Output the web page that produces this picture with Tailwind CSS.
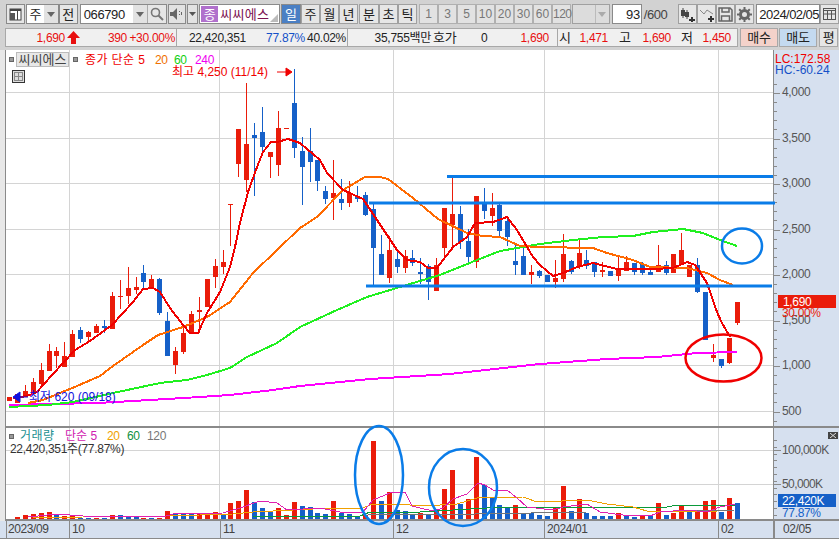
<!DOCTYPE html>
<html lang="ko">
<head>
<meta charset="UTF-8">
<script src="https://cdn.jsdelivr.net/npm/@tailwindcss/browser@4"></script>
<title>씨씨에스 차트</title>
</head>
<body class="m-0 w-[839px] h-[539px] overflow-hidden bg-[#d2d2d2] text-[12px] leading-none text-[#222] font-['Liberation_Sans','Noto_Sans_CJK_KR',sans-serif]">

<!-- toolbar -->
<div class="flex items-center h-[27px] pl-[6px] pt-[1px]">
  <button class="flex items-center justify-center w-[19px] h-[20px] bg-[#e6e6e6] border border-[#8a8a8a]">
    <svg width="13" height="13" viewBox="0 0 13 13"><rect x="1" y="1" width="11" height="11" fill="#fff" stroke="#444"/><rect x="1" y="1" width="11" height="2" fill="#444"/><rect x="1" y="5" width="5" height="7" fill="#555"/><line x1="8.5" y1="3" x2="8.5" y2="12" stroke="#444"/></svg>
  </button>
  <div class="flex ml-[1px] w-[33px] h-[20px] border border-[#8a8a8a] bg-white">
    <span class="flex-1 flex items-center justify-center text-[13px]">주</span>
    <span class="flex items-center justify-center w-[14px] bg-[#e2e2e2]"><svg width="8" height="5"><path d="M0 0h8L4 5z" fill="#666"/></svg></span>
  </div>
  <button class="w-[19px] h-[20px] ml-[0px] bg-[#e6e6e6] border border-[#8a8a8a] text-[13px]">전</button>
  <div class="flex ml-[2px] w-[88px] h-[20px] border border-[#8a8a8a] bg-white">
    <span class="flex-1 flex items-center pl-[3px] text-[13px] tracking-[-0.4px]">066790</span>
    <span class="flex items-center justify-center w-[14px] bg-[#e2e2e2]"><svg width="8" height="5"><path d="M0 0h8L4 5z" fill="#666"/></svg></span>
    <span class="flex items-center justify-center w-[19px] bg-[#e6e6e6] border-l border-[#aaa]"><svg width="14" height="14" viewBox="0 0 14 14" fill="none" stroke="#777" stroke-width="1.6"><circle cx="5.5" cy="5.5" r="4"/><path d="M8.5 8.5l4.5 4.5" stroke-width="2"/></svg></span>
  </div>
  <button class="flex items-center justify-center w-[18px] h-[20px] ml-[1px] bg-[#e2e2e2] border border-[#8a8a8a]">
    <svg width="14" height="12" viewBox="0 0 14 12"><path d="M0 4h3l4-4v12L3 8H0z" fill="#666"/><path d="M9 3h1v1H9zM9 6h1v1H9zM11 4h1v3h-1z" fill="#666"/></svg>
  </button>
  <button class="flex items-center justify-center w-[11px] h-[20px] ml-[1px] bg-[#e2e2e2] border border-[#8a8a8a]"><svg width="7" height="4"><path d="M0 0h7L3.5 4z" fill="#555"/></svg></button>
  <div class="relative flex items-center w-[81px] h-[20px] ml-[1px] bg-white border border-[#8a8a8a]">
    <span class="flex items-center justify-center w-[17px] h-[16px] ml-[1px] bg-[#b070cc] text-white text-[13px]">종</span>
    <span class="ml-[2px] text-[13px] tracking-[0.3px] text-[#7a1050]">씨씨에스</span>
    <svg class="absolute right-[1px] bottom-[1px]" width="8" height="8"><path d="M8 0v8H0z" fill="#bbb"/></svg>
  </div>
  <div class="flex ml-[1px] text-[13px]">
    <button class="w-[20px] h-[20px] bg-[#4a7fc4] text-white border border-[#8a8a8a]">일</button>
    <button class="w-[19px] h-[20px] bg-[#e6e6e6] border border-[#a0a0a0]">주</button>
    <button class="w-[19px] h-[20px] bg-[#e6e6e6] border border-[#a0a0a0]">월</button>
    <button class="w-[19px] h-[20px] bg-[#e6e6e6] border border-[#a0a0a0]">년</button>
    <button class="w-[20px] h-[20px] ml-[1px] bg-[#e6e6e6] border border-[#a0a0a0]">분</button>
    <button class="w-[19px] h-[20px] bg-[#e6e6e6] border border-[#a0a0a0]">초</button>
    <button class="w-[19px] h-[20px] bg-[#e6e6e6] border border-[#a0a0a0]">틱</button>
  </div>
  <div class="flex ml-[2px] text-[#777]">
    <button class="w-[19px] h-[20px] bg-[#e2e2e2] border border-[#b0b0b0]">1</button>
    <button class="w-[19px] h-[20px] bg-[#e2e2e2] border border-[#b0b0b0]">3</button>
    <button class="w-[19px] h-[20px] bg-[#e2e2e2] border border-[#b0b0b0]">5</button>
    <button class="w-[19px] h-[20px] bg-[#e2e2e2] border border-[#b0b0b0]">10</button>
    <button class="w-[19px] h-[20px] bg-[#e2e2e2] border border-[#b0b0b0]">20</button>
    <button class="w-[19px] h-[20px] bg-[#e2e2e2] border border-[#b0b0b0]">30</button>
    <button class="w-[19px] h-[20px] bg-[#e2e2e2] border border-[#b0b0b0]">60</button>
    <button class="w-[19px] h-[20px] bg-[#e2e2e2] border border-[#b0b0b0] tracking-[-0.5px]">120</button>
  </div>
  <div class="flex ml-[1px] w-[38px] h-[20px] bg-[#dcdcdc] border border-[#a0a0a0]">
    <span class="flex-1"></span>
    <span class="flex items-center justify-center w-[14px] border-l border-[#bbb]"><svg width="8" height="5"><path d="M0 0h8L4 5z" fill="#aaa"/></svg></span>
  </div>
  <div class="flex items-center justify-end w-[30px] h-[20px] ml-[2px] pr-[1px] bg-white border border-[#8a8a8a] text-[13px] tracking-[-0.4px]">93</div>
  <span class="ml-[2px] w-[34px] text-[13px] tracking-[-0.4px] text-[#444]">/600</span>
  <button class="flex items-center justify-center w-[19px] h-[20px] bg-[#e6e6e6] border border-[#a0a0a0]">
    <svg width="15" height="15" viewBox="0 0 15 15"><path d="M3 1v10M7 3v9" stroke="#444"/><rect x="1" y="3" width="4" height="6" fill="#444"/><rect x="5" y="5" width="4" height="5" fill="#444"/><path d="M11 10h2v2h2v2h-2v1h-2v-1H9v-2h2z" fill="#333"/></svg>
  </button>
  <button class="flex items-center justify-center w-[20px] h-[20px] bg-[#e6e6e6] border border-[#a0a0a0]">
    <svg width="16" height="15" viewBox="0 0 16 15"><path d="M1 3l4 4 3-4 6 4" fill="none" stroke="#888"/><path d="M11 9h2v2h2v2h-2v2h-2v-2H9v-2h2z" fill="#333"/></svg>
  </button>
  <button class="flex items-center justify-center w-[19px] h-[20px] bg-[#e6e6e6] border border-[#a0a0a0]">
    <svg width="15" height="15" viewBox="0 0 15 15" fill="none" stroke="#666" stroke-width="1.5"><path d="M1 1h11l2 2v11H1z"/><path d="M4 1v4h7V1M3.5 14V9h8v5"/></svg>
  </button>
  <button class="flex items-center justify-center w-[19px] h-[20px] bg-[#e6e6e6] border border-[#a0a0a0]">
    <svg width="15" height="15" viewBox="0 0 15 15"><circle cx="7.5" cy="7.5" r="4" fill="none" stroke="#666" stroke-width="3"/><path d="M7.5 0v15M0 7.5h15M2.2 2.2l10.6 10.6M12.8 2.2L2.2 12.8" stroke="#666" stroke-width="2" stroke-dasharray="2.5 10 2.5 0"/></svg>
  </button>
  <div class="flex items-center w-[64px] h-[20px] ml-[2px] pl-[2px] bg-white border border-[#8a8a8a] text-[13px] tracking-[-0.55px] whitespace-nowrap">2024/02/05</div>
  <button class="flex items-center justify-center w-[19px] h-[20px] bg-[#e6e6e6] border border-[#a0a0a0]">
    <svg width="13" height="12" viewBox="0 0 13 12" fill="none" stroke="#555"><rect x=".5" y=".5" width="12" height="11"/><path d="M.5 2.5h12M.5 6h12M4.500 2v10M8.500 2v10"/></svg>
  </button>
</div>

<!-- price strip -->
<div class="flex items-center h-[19px] mt-[1px] pl-[5px] mb-[3px] text-[12px] tracking-[-0.3px] whitespace-nowrap">
  <div class="flex items-center w-[172px] h-full bg-[#f0f0f0] border border-[#a8a8a8] text-[#e81010]">
    <span class="w-[59px] text-right">1,690</span>
    <svg class="ml-[2px]" width="13" height="13" viewBox="0 0 13 13"><path d="M6.500 0L13 7H9v6H4V7H0z" fill="#e81010"/></svg>
    <span class="w-[47px] text-right">390</span>
    <span class="w-[48px] text-right">+30.00%</span>
  </div>
  <div class="flex items-center w-[171px] h-full bg-[#f0f0f0] border-y border-r border-[#a8a8a8]">
    <span class="w-[69px] text-right">22,420,351</span>
    <span class="w-[59px] text-right text-[#1450c8]">77.87%</span>
    <span class="w-[41px] text-right">40.02%</span>
  </div>
  <div class="flex items-center w-[209px] h-full bg-[#f0f0f0] border-y border-[#a8a8a8]">
    <span class="w-[83px] text-right">35,755백만</span>
    <span class="ml-[2px] w-[26px] text-[13px]">호가</span>
    <span class="ml-[22px] w-[6px]">0</span>
    <span class="w-[62px] text-right text-[#e81010]">1,690</span>
  </div>
  <div class="flex items-center w-[181px] h-full bg-[#f0f0f0] border border-[#a8a8a8]">
    <span class="ml-[1px] w-[10px] text-[13px]">시</span>
    <span class="w-[39px] text-right text-[#e81010]">1,471</span>
    <span class="ml-[11px] w-[12px] text-[13px]">고</span>
    <span class="w-[40px] text-right text-[#e81010]">1,690</span>
    <span class="ml-[10px] w-[12px] text-[13px]">저</span>
    <span class="w-[38px] text-right text-[#e81010]">1,450</span>
  </div>
  <button class="w-[38px] h-full ml-[2px] bg-[#f4d2ca] border border-[#a8a8a8] text-[13px]">매수</button>
  <button class="w-[38px] h-full ml-[1px] bg-[#c4daf0] border border-[#a8a8a8] text-[13px]">매도</button>
  <button class="w-[19px] h-full ml-[2px] bg-[#e6e6e6] border border-[#a8a8a8] text-[13px]">평</button>
</div>

<!-- chart -->
<div class="relative h-[489px] bg-[#e8e8e8]">
  <svg id="price" class="block" width="839" height="378" viewBox="0 50 839 378" font-size="12" letter-spacing="-0.35"></svg>
  <svg id="volume" class="block" width="839" height="93" viewBox="0 428 839 93" font-size="12" letter-spacing="-0.35"></svg>

  <!-- legend, price panel -->
  <div class="absolute left-[9px] top-[2px] flex items-center">
    <span class="w-[5px] h-[5px] bg-[#999] border border-[#666]"></span>
    <span class="flex items-center justify-center w-[53px] h-[15px] ml-[2px] bg-[#e8e8e8] border border-[#bbb] text-[13px] text-[#444]">씨씨에스</span>
    <span class="w-[5px] h-[5px] ml-[4px] bg-[#999] border border-[#666]"></span>
    <span class="ml-[7px] w-[70px] text-[#f00000] whitespace-nowrap tracking-[0.4px]">종가 단순 5</span>
    <span class="w-[19px] text-[#f07000] tracking-[-0.3px]">20</span>
    <span class="w-[21px] text-[#10d010] tracking-[-0.3px]">60</span>
    <span class="text-[#f000f0] tracking-[-0.3px]">240</span>
  </div>
  <span class="absolute left-[12px] top-[20px] flex items-center justify-center w-[13px] h-[13px] bg-[#ddd] border border-[#333]">
    <svg width="9" height="9" viewBox="0 0 9 9" fill="none" stroke="#888"><path d="M0 .5h9M0 4.500h9M0 8.500h9M.5 0v9M4.500 0v9M8.500 0v9"/></svg>
  </span>
  <span class="absolute left-[172px] top-[16px] text-[#f00000] whitespace-nowrap">최고 4,250 (11/14)</span>
  <span class="absolute left-[29px] top-[341px] text-[#1010e0] whitespace-nowrap">최저 620 (09/18)</span>
  <span class="absolute left-[775px] top-[3px] text-[#f00000] whitespace-nowrap">LC:172.58</span>
  <span class="absolute left-[775px] top-[14px] text-[#1450c8] whitespace-nowrap">HC:-60.24</span>

  <!-- legend, volume panel -->
  <div class="absolute left-[9px] top-[380px] flex items-center">
    <span class="w-[5px] h-[5px] bg-[#999] border border-[#666]"></span>
    <span class="ml-[6px] w-[45px] text-[#209090] tracking-[0.5px]">거래량</span>
    <span class="w-[42px] text-[#d020b0]">단순 5</span>
    <span class="w-[20px] text-[#f0a000] tracking-[-0.3px]">20</span>
    <span class="w-[20px] text-[#109040] tracking-[-0.3px]">60</span>
    <span class="text-[#777] tracking-[-0.3px]">120</span>
  </div>
  <span class="absolute left-[10px] top-[393px] text-[#333] whitespace-nowrap tracking-[-0.3px]">22,420,351주(77.87%)</span>
  <span class="absolute left-[828px] top-[382px] flex items-center justify-center w-[10px] h-[7px] bg-[#444]"><svg width="6" height="5" stroke="#ddd"><path d="M0 0l6 5M6 0L0 5"/></svg></span>

  <!-- date axis -->
  <div class="flex h-[18px] w-[839px] bg-[#d6e0ef] border-b border-[#8a8a8a] text-[#444] text-[12px] tracking-[-0.4px]">
    <span class="ml-[6px] pl-[1px] pt-[2px] w-[63px] border-l border-[#8a8a8a]">2023/09</span>
    <span class="pl-[2px] pt-[2px] w-[151px] border-l border-[#8a8a8a]">10</span>
    <span class="pl-[2px] pt-[2px] w-[173px] border-l border-[#8a8a8a]">11</span>
    <span class="pl-[2px] pt-[2px] w-[151px] border-l border-[#8a8a8a]">12</span>
    <span class="pl-[2px] pt-[2px] w-[174px] border-l border-[#8a8a8a]">2024/01</span>
    <span class="pl-[2px] pt-[2px] w-[55px] border-l border-[#8a8a8a]">02</span>
    <span class="pl-[8px] pt-[2px] flex-1 border-l-2 border-[#8a8a8a]">02/05</span>
  </div>

  <!-- hand-drawn marks, they run over the panel edges -->
  <svg class="absolute left-0 top-0 pointer-events-none" width="839" height="489" viewBox="0 50 839 489" fill="none" stroke="#0a7ce8" stroke-width="2.5">
    <ellipse cx="379" cy="475" rx="24" ry="49"/>
    <ellipse cx="463" cy="487.5" rx="34" ry="38.5"/>
    <ellipse cx="742" cy="246" rx="20" ry="17.5"/>
    <ellipse cx="723.5" cy="358" rx="38" ry="23.5" stroke="#f00000"/>
  </svg>
</div>

<script>
// 캔들: [색, 몸통 위, 몸통 아래, 꼬리 위, 꼬리 아래] (px)
const candles = [
['r',397,401,397,401],['r',394,403,394,403],['r',391,396,385,397],['r',382,393,378,393],['r',370,384,363,385],
['r',351,371,344,371],['r',351,356,347,368],['r',356,367,342,367],['r',334,357,330,357],['b',330,339,327,343],
['r',332,337,331,341],['r',326,333,324,333],['b',326,328,320,333],['r',296,329,292,329],['r',296,297,280,309],
['r',288,296,267,304],['r',287,290,277,294],['b',273,282,265,290],['r',279,287,275,288],['b',279,313,278,315],
['b',321,356,312,356],['r',351,365,347,374],['r',333,352,324,354],['r',314,333,311,333],['r',310,312,297,333],
['r',279,307,279,307],['r',266,277,259,288],['r',262,267,250,274],['r',204,205,204,246],['r',129,164,129,177],
['r',144,180,83,192],['b',135,138,123,196],['b',132,147,107,153],['r',152,157,152,178],['r',128,165,111,176],
['r',128,129,128,129],['b',103,148,69,158],['b',151,167,137,205],['b',151,162,128,182],['b',160,181,160,191],
['b',191,199,186,204],['r',193,198,160,220],['b',199,203,179,210],['r',193,203,181,207],['b',196,199,186,202],
['b',195,215,192,216],['b',209,248,204,286],['b',254,275,235,275],['r',250,278,236,283],['b',259,267,252,273],
['r',256,268,250,273],['b',258,263,250,266],['b',272,274,258,284],['b',266,282,264,300],['r',265,291,258,291],
['r',208,248,208,256],['r',214,225,176,250],['b',214,242,206,249],['b',241,257,229,265],['r',196,262,196,268],
['b',203,211,188,219],['r',208,216,193,226],['b',205,231,203,236],['b',221,237,217,246],['b',261,265,245,275],
['b',256,275,245,275],['r',272,275,265,284],['b',271,276,270,278],['b',275,282,275,282],['r',278,282,260,288],
['r',254,279,234,282],['b',261,272,260,274],['r',253,266,239,269],['b',260,266,250,269],['b',262,272,262,277],
['r',270,272,262,277],['b',271,276,271,276],['r',268,276,256,281],['r',262,271,256,271],['b',263,272,263,275],
['b',264,273,262,275],['b',272,275,266,275],['r',265,272,245,272],['b',265,273,261,275],['r',254,273,254,273],
['r',250,264,233,264],['r',265,277,265,277],['b',265,292,258,293],['b',292,340,292,340],['r',355,358,344,362],
['b',359,366,359,368],['r',338,363,338,364],['r',302,323,302,325]];

const RED = '#ea1c0a', BLUE = '#1560c8';
const xOf = i => Math.round(9 + 7.91 * i);
const poly = (pts, color, w) => `<polyline points="${pts}" fill="none" stroke="${color}" stroke-width="${w}" stroke-linejoin="round" shape-rendering="crispEdges"/>`;
const hLine = (y, x1, x2, c) => `<line x1="${x1}" x2="${x2}" y1="${y}" y2="${y}" stroke="${c}" shape-rendering="crispEdges"/>`;
const vLine = (x, y1, y2, c) => `<line x1="${x}" x2="${x}" y1="${y1}" y2="${y2}" stroke="${c}" shape-rendering="crispEdges"/>`;
const vGrid = [69.5, 219.5, 393.5, 544.5, 718.5];

const ma5 = '13,398 27,396 37,392 43,385 63,363 75,350 90,341 112,325 133,302 143,289 153,288 160,292 170,308 183,325 190,333 198,333 207,313 220,292 230,267 235,247 240,223 248,192 257,167 263,152 271,142 277,142 288,139 300,143 320,160 327,173 343,190 363,199 375,217 387,235 397,250 407,260 420,262 428,268 437,268 453,247 467,237 475,223 493,222 507,217 517,230 533,257 540,265 553,276 563,273 577,267 593,263 617,269 653,269 673,268 687,262 695,265 707,283 717,312 722,323 730,337';
const ma20 = '28,403 43,400 77,386 100,376 113,366 143,345 158,335 183,327 207,317 230,302 253,273 277,250 300,228 317,217 343,190 365,177 380,177 388,179 413,198 438,219 467,233 483,236 500,237 520,246 540,247 593,248 607,253 633,260 650,267 687,268 707,273 720,280 733,285';
const ma60 = '9,407 48,405 73,402 113,393 160,383 187,380 207,375 230,368 247,357 277,343 300,327 337,310 367,297 400,287 440,275 477,260 500,251 540,244 573,240 603,237 633,236 653,232 683,229 703,233 720,240 737,246';
const ma240 = '9,405 97,403 133,401 200,397 230,395 273,390 300,386 370,379 450,374 540,364 607,359 657,357 697,353 737,352';

// 가격 패널
let s = `<rect x="6" y="50" width="767" height="378" fill="#fff"/><rect x="773" y="50" width="66" height="378" fill="#d6e0ef"/>`;
[92.5,138.5,183.5,229.5,274.5,320.5,365.5,411.5].forEach(y => s += hLine(y, 6, 773, '#d4d4d4'));
vGrid.forEach(x => s += vLine(x, 50, 426, '#d4d4d4'));
s += vLine(5.5, 50, 428, '#8a8a8a') + vLine(773.5, 50, 428, '#8a8a8a');
s += `<rect x="6" y="426" width="833" height="2" fill="#8a8a8a"/>`;
for (let p = 0; p < 38; p++) {
  const y = Math.round(411.5 - 9.1 * (p - 1)) + .5;
  if (y > 56 && y < 426) s += hLine(y, 774, (p - 1) % 5 == 0 ? 780 : 777, '#8a8a8a');
}
[['4,000',92],['3,500',138],['3,000',183],['2,500',229],['2,000',274],['1,500',320],['1,000',365],['500',411]].forEach(t => {
  s += `<text x="782" y="${t[1] + 4}" fill="#555">${t[0]}</text>`;
});
candles.forEach((c, i) => {
  const x = xOf(i), col = c[0] == 'r' ? RED : BLUE;
  s += `<g shape-rendering="crispEdges"><rect x="${x}" y="${c[3]}" width="1" height="${c[4] - c[3] || 1}" fill="${col}"/><rect x="${x - 2}" y="${c[1]}" width="5" height="${c[2] - c[1] || 1}" fill="${col}"/></g>`;
});
s += poly(ma240, '#ff00ff', 2) + poly(ma60, '#20f020', 2) + poly(ma20, '#ff6a00', 2) + poly(ma5, '#f00000', 2);
[[447,176.5,773],[369,203,775],[366,286,772]].forEach(l => {
  s += `<line x1="${l[0]}" x2="${l[2]}" y1="${l[1]}" y2="${l[1]}" stroke="#0a7ce8" stroke-width="3"/>`;
});
s += `<path d="M277 72h9M286 68l6 4-6 4z" stroke="#f00000" fill="#f00000"/>`;
s += `<path d="M28 397H19M20 392l-7 5 7 5z" stroke="#1010e0" fill="#1010e0"/>`;
s += `<rect x="778" y="295" width="58" height="13" fill="#ea1c0a"/><text x="783" y="306" fill="#fff">1,690</text><text x="782" y="317" fill="#ea1c0a">30.00%</text>`;
document.getElementById('price').innerHTML = s;

// 거래량 패널: 각 봉의 막대 위쪽 y
const vol = 'r276 r270 r267 r264 r261 b268 r272 r272 b278 b278 r278 b278 r270 b270 b276 b276 r278 b278 r278 r258 b264 b264 b266 r266 r264 r261 b268 r234 r228 r195 b232 b249 b258 r249 r270 r231 b243 b246 b264 b268 r228 b264 b268 b275 r270 r48 b228 r201 b255 b258 b267 r264 b270 r258 r192 r135 b237 r222 r96 b180 b216 b240 b246 r240 b264 b264 b270 b273 r249 r183 b258 r222 b264 b273 b273 b273 r264 b273 b276 r273 b273 r234 b270 r264 r243 b261 r261 r228 r225 b261 r219 b234'.split(' ');
let v = `<rect x="6" y="428" width="767" height="91" fill="#fff"/><rect x="773" y="428" width="66" height="93" fill="#d6e0ef"/><rect x="6" y="519" width="833" height="2" fill="#8a8a8a"/>`;
v += hLine(450.5, 6, 773, '#d4d4d4') + hLine(484.5, 6, 773, '#d4d4d4');
vGrid.forEach(x => v += vLine(x, 428, 519, '#d4d4d4'));
v += vLine(5.5, 428, 521, '#8a8a8a') + vLine(773.5, 428, 521, '#8a8a8a');
for (let y = 440; y < 518; y += 6.8) v += hLine(Math.round(y) + .5, 774, 777, '#8a8a8a');
v += hLine(450.5, 774, 781, '#8a8a8a') + hLine(484.5, 774, 781, '#8a8a8a');
v += `<text x="782" y="454" fill="#555" letter-spacing="-0.6">100,000K</text><text x="782" y="488" fill="#555" letter-spacing="-0.6">50,000K</text>`;
vol.forEach((b, i) => {
  const top = Math.round(425 + b.slice(1) / 3);
  v += `<rect x="${xOf(i + 1) - 2}" y="${top}" width="5" height="${519 - top}" fill="${b[0] == 'r' ? RED : BLUE}" shape-rendering="crispEdges"/>`;
});
v += poly('367,514 420,515 587,512 653,512 735,510', '#777', 1);
v += poly('253,516 360,516 370,512 420,512 453,510 487,508 667,507 677,505 735,505', '#0a9a3a', 1);
v += poly('33,518 83,517 167,516 233,514 253,512 333,508 363,508 370,505 400,504 420,506 440,505 457,504 477,498 523,497 537,502 587,500 607,504 633,507 647,511 703,511 717,511', '#f0a000', 1);
v += poly('28,517 57,514 83,516 163,517 173,514 223,513 240,508 260,501 277,503 287,510 320,508 340,512 363,512 373,500 390,493 405,492 412,506 420,508 433,511 443,508 453,499 467,494 478,483 485,485 493,490 507,490 517,498 527,507 553,510 563,507 587,504 600,512 623,515 650,516 660,512 687,510 707,512 720,507 735,504', '#e020b0', 1);
v += `<rect x="778" y="494" width="58" height="13" fill="#1560c8"/><text x="782" y="505" fill="#fff">22,420K</text><text x="782" y="517" fill="#1560c8">77.87%</text>`;
document.getElementById('volume').innerHTML = v;
</script>
</body>
</html>
